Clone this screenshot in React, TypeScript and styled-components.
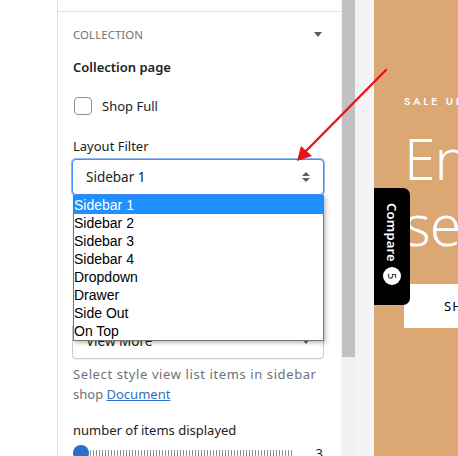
import React from "react";
import styled, { createGlobalStyle } from "styled-components";

const Global = createGlobalStyle`
  html, body { margin: 0; padding: 0; background: #ffffff; }
  body { font-family: "Segoe UI", "Noto Sans", "Open Sans", sans-serif; }
  * { box-sizing: border-box; }
`;

const Page = styled.div`
  position: relative;
  display: flex;
  width: 458px;
  height: 456px;
  overflow: hidden;
  background: #ffffff;
`;

const LeftGap = styled.div`
  width: 57px;
  flex: none;
  background: #ffffff;
`;

const Panel = styled.div`
  position: relative;
  width: 284px;
  flex: none;
  border-left: 1px solid #e1e3e5;
  background: #ffffff;
  display: flex;
  flex-direction: column;
`;

const PanelTop = styled.div`
  height: 12px;
  border-bottom: 1px solid #e1e3e5;
  flex: none;
`;

const Content = styled.div`
  position: relative;
  padding: 12px 17px 0 14px;
  display: flex;
  flex-direction: column;
  font-size: 13px;
  color: #202223;
`;

const SectionHead = styled.div`
  display: flex;
  align-items: center;
  justify-content: space-between;
  height: 20px;
  padding-right: 2px;
`;

const SectionTitle = styled.span`
  font-size: 11.4px;
  letter-spacing: 0.1px;
  text-transform: uppercase;
  color: #6d7175;
  padding-left: 1px;
`;

const Caret = styled.span`
  width: 0;
  height: 0;
  border-left: 4.5px solid transparent;
  border-right: 4.5px solid transparent;
  border-top: 5px solid #5c5f62;
`;

const PageTitle = styled.div`
  margin-top: 13px;
  line-height: 20px;
  font-weight: 600;
  padding-left: 1px;
`;

const CheckRow = styled.label`
  display: flex;
  align-items: center;
  gap: 10px;
  margin-top: 19px;
  height: 20px;
  padding-left: 2px;
`;

const Box = styled.span`
  width: 18px;
  height: 18px;
  border: 1.5px solid #8c9196;
  border-radius: 4px;
  background: #fff;
`;

const Label = styled.div<{ $top: number }>`
  margin-top: ${(p) => p.$top}px;
  line-height: 20px;
  padding-left: 1px;
`;

const Select = styled.div<{ $focus?: boolean }>`
  position: relative;
  margin-top: 3px;
  height: 36px;
  border: 1px solid ${(p) => (p.$focus ? "#458fff" : "#c9cccf")};
  box-shadow: ${(p) =>
    p.$focus ? "0 0 0 1px #8db8f5, 0 1px 2px rgba(0,0,0,0.15)" : "0 1px 0 rgba(0,0,0,0.05)"};
  border-radius: 4px;
  display: flex;
  align-items: center;
  justify-content: space-between;
  padding: 0 13px 0 13px;
  font-size: 13.5px;
  color: #202223;
  background: #fff;
`;

const UpDown = styled.span`
  display: flex;
  flex-direction: column;
  gap: 2px;
  &::before, &::after {
    content: "";
    width: 0;
    height: 0;
    border-left: 4px solid transparent;
    border-right: 4px solid transparent;
  }
  &::before { border-bottom: 4px solid #5c5f62; }
  &::after { border-top: 4px solid #5c5f62; }
`;

const Spacer = styled.div<{ $h: number }>`
  height: ${(p) => p.$h}px;
  flex: none;
`;

const Help = styled.div`
  margin-top: 5px;
  line-height: 20px;
  color: #6d7175;
  padding-left: 1px;
`;

const HelpLead = styled.span`
  letter-spacing: 0.6px;
`;

const DocLink = styled.a`
  color: #2c6ecb;
  text-decoration: underline;
`;

const SliderRow = styled.div`
  display: flex;
  align-items: center;
  margin-top: 5px;
  height: 16px;
  gap: 0;
`;

const Thumb = styled.span`
  width: 16px;
  height: 16px;
  border-radius: 50%;
  background: #2c6ecb;
  flex: none;
  margin-left: 1px;
`;

const Track = styled.span`
  width: 204px;
  height: 7px;
  margin-left: 1px;
  background: repeating-linear-gradient(
    90deg,
    #8c9196 0 1px,
    transparent 1px 3px
  );
  flex: none;
`;

const SliderValue = styled.span`
  margin-left: auto;
  margin-right: 1px;
  font-size: 13px;
  color: #202223;
`;

const DropList = styled.ul`
  position: absolute;
  left: 15px;
  top: 183px;
  width: 251px;
  margin: 0;
  padding: 0;
  list-style: none;
  background: #fff;
  border: 1px solid #767676;
  box-shadow: 2px 2px 4px rgba(0, 0, 0, 0.25);
  font-family: "Liberation Sans", Arial, sans-serif;
  font-size: 14px;
  color: #000;
`;

const DropItem = styled.li<{ $active?: boolean }>`
  height: 18px;
  line-height: 18px;
  padding-left: 0;
  background: ${(p) => (p.$active ? "#1e90ff" : "transparent")};
  color: ${(p) => (p.$active ? "#fff" : "#000")};
`;

const Scrollbar = styled.div`
  width: 16px;
  flex: none;
  background: #f1f1f1;
  padding: 0 2px 0 1px;
`;

const ScrollThumb = styled.div`
  height: 357px;
  background: #c1c1c1;
`;

const Gutter = styled.div`
  width: 17px;
  flex: none;
  background: #f4f4f6;
`;

const Preview = styled.div`
  position: relative;
  flex: 1;
  background: #dba874;
  overflow: hidden;
  padding: 93px 0 0 30px;
  color: #fff;
  font-family: "Jost", "Montserrat", "Noto Sans", sans-serif;
`;

const Eyebrow = styled.div`
  font-size: 11px;
  letter-spacing: 2.6px;
  font-weight: 500;
  white-space: nowrap;
  line-height: 16px;
`;

const Headline = styled.div`
  margin-top: 16px;
  font-family: "Noto Sans", sans-serif;
  font-weight: 300;
  font-size: 57px;
  line-height: 66px;
  white-space: nowrap;
  letter-spacing: -1px;
`;

const ShopButton = styled.div`
  margin-top: 27px;
  width: 160px;
  height: 44px;
  background: #fff;
  color: #000;
  display: flex;
  align-items: center;
  padding-left: 40px;
  font-size: 13px;
  letter-spacing: 1px;
  white-space: nowrap;
  font-family: "Noto Sans", sans-serif;
`;

const CompareTab = styled.div`
  position: absolute;
  left: 374px;
  top: 188px;
  width: 36px;
  height: 117px;
  background: #000;
  border-radius: 0 7px 7px 0;
  display: flex;
  flex-direction: column;
  align-items: center;
  padding-top: 15px;
  gap: 5px;
  color: #fff;
`;

const CompareText = styled.span`
  writing-mode: vertical-rl;
  font-family: "Noto Sans", sans-serif;
  font-weight: 600;
  font-size: 13px;
  line-height: 16px;
  letter-spacing: 0.2px;
`;

const Badge = styled.span`
  width: 18px;
  height: 18px;
  border-radius: 50%;
  background: #fff;
  color: #000;
  display: flex;
  align-items: center;
  justify-content: center;
  font-size: 11px;
  font-family: "Noto Sans", sans-serif;
  writing-mode: vertical-rl;
`;

const ArrowLayer = styled.svg`
  position: absolute;
  left: 0;
  top: 0;
  pointer-events: none;
`;

const options = [
  "Sidebar 1",
  "Sidebar 2",
  "Sidebar 3",
  "Sidebar 4",
  "Dropdown",
  "Drawer",
  "Side Out",
  "On Top",
];

export default function App() {
  return (
    <>
      <Global />
      <Page>
        <LeftGap />
        <Panel>
          <PanelTop />
          <Content>
            <SectionHead>
              <SectionTitle>Collection</SectionTitle>
              <Caret />
            </SectionHead>
            <PageTitle>Collection page</PageTitle>
            <CheckRow>
              <Box />
              <span>Shop Full</span>
            </CheckRow>
            <Label $top={20}>Layout Filter</Label>
            <Select $focus>
              <span>Sidebar 1</span>
              <UpDown />
            </Select>
            <Spacer $h={105} />
            <Label $top={0}>Style view list items</Label>
            <Select>
              <span>View More</span>
              <Caret />
            </Select>
            <Help>
              <HelpLead>Select style view list items in sidebar</HelpLead> shop{" "}
              <DocLink href="#">Document</DocLink>
            </Help>
            <Label $top={16}>number of items displayed</Label>
            <SliderRow>
              <Thumb />
              <Track />
              <SliderValue>3</SliderValue>
            </SliderRow>
            <DropList>
              {options.map((o, i) => (
                <DropItem key={o} $active={i === 0}>
                  {o}
                </DropItem>
              ))}
            </DropList>
          </Content>
        </Panel>
        <Scrollbar>
          <ScrollThumb />
        </Scrollbar>
        <Gutter />
        <Preview>
          <Eyebrow>SALE UP TO 50% OFF</Eyebrow>
          <Headline>
            Enjoy
            <br />
            season
          </Headline>
          <ShopButton>SHOP NOW</ShopButton>
        </Preview>
        <CompareTab>
          <CompareText>Compare</CompareText>
          <Badge>5</Badge>
        </CompareTab>
        <ArrowLayer width="458" height="456" viewBox="0 0 458 456">
          <line x1="386" y1="70" x2="304" y2="153" stroke="#e8141b" strokeWidth="2.4" strokeLinecap="round" />
          <polygon points="297,161 301,146 312,156" fill="#e8141b" />
        </ArrowLayer>
      </Page>
    </>
  );
}
